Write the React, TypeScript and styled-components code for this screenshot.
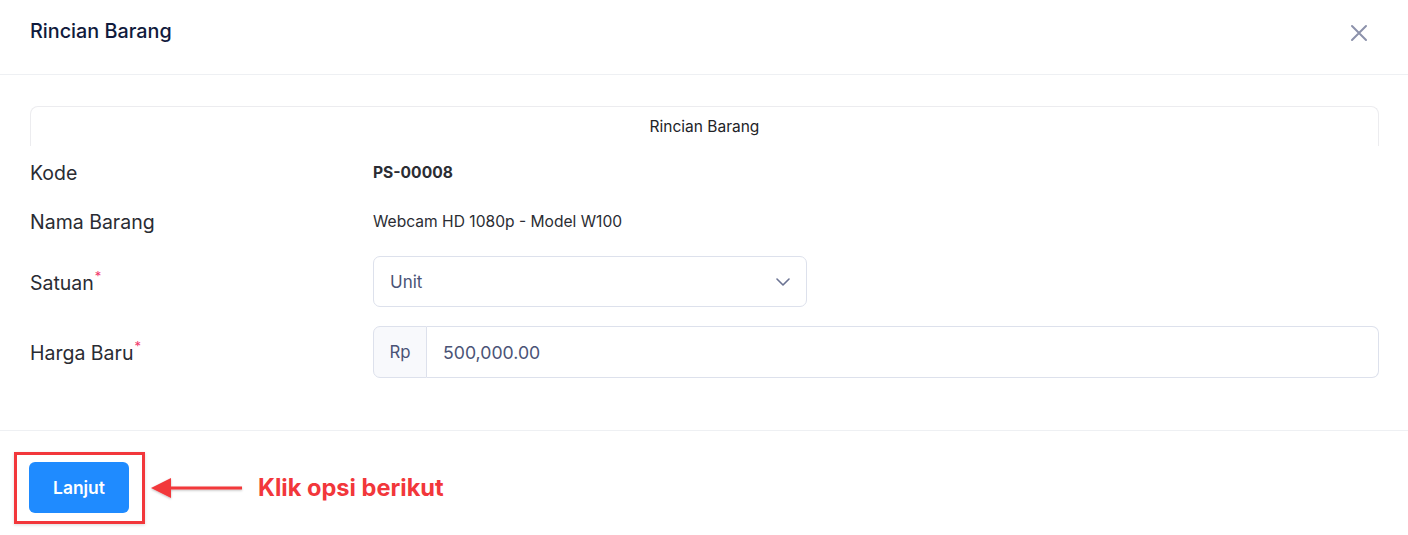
import React from 'react';
import styled, { createGlobalStyle } from 'styled-components';

const GlobalStyle = createGlobalStyle`
  html, body {
    margin: 0;
    padding: 0;
    background: #ffffff;
    font-family: Inter, 'Noto Sans', 'Liberation Sans', sans-serif;
  }
  * {
    box-sizing: border-box;
  }
`;

const Dialog = styled.div`
  width: 1408px;
  height: 535px;
  background: #fff;
  display: flex;
  flex-direction: column;
  overflow: hidden;
`;

const Header = styled.div`
  height: 75px;
  padding: 0 29px 0 30px;
  display: flex;
  align-items: center;
  justify-content: space-between;
  border-bottom: 1px solid #eef0f3;
`;

const Title = styled.h2`
  margin: 0 0 12px;
  font-size: 19.8px;
  font-weight: 500;
  color: #101a3c;
`;

const CloseButton = styled.button`
  border: 0;
  background: none;
  padding: 0;
  margin: 0 10px 8px 0;
  width: 20px;
  height: 20px;
  display: flex;
  align-items: center;
  justify-content: center;
  cursor: pointer;
`;

const Body = styled.div`
  padding: 31px 29px 52px 30px;
  border-bottom: 1px solid #eef0f3;
`;

const Card = styled.div`
  height: 40px;
  border: 1px solid #ececef;
  border-bottom: 0;
  border-radius: 8px 8px 0 0;
  display: flex;
  justify-content: center;
  padding-top: 10px;
  font-size: 15.5px;
  color: #222327;
`;

const Row = styled.div<{ $height: number; $top?: number }>`
  display: grid;
  grid-template-columns: 343px 1fr;
  align-items: center;
  min-height: ${(p) => p.$height}px;
  margin-top: ${(p) => p.$top ?? 0}px;
`;

const Label = styled.div`
  font-size: 19.5px;
  color: #2a2c33;
`;

const Required = styled.sup`
  color: #f0386b;
  font-size: 13px;
  margin-left: 1px;
  position: relative;
  top: -1px;
`;

const Value = styled.div<{ $bold?: boolean }>`
  font-size: 15.6px;
  font-weight: ${(p) => (p.$bold ? 700 : 400)};
  color: #2b2d33;
`;

const Select = styled.div`
  width: 434px;
  height: 51px;
  border: 1px solid #dde1ec;
  border-radius: 7px;
  display: flex;
  align-items: center;
  justify-content: space-between;
  padding: 0 16px 0 16px;
  font-size: 17px;
  color: #4a5376;
`;

const InputGroup = styled.div`
  display: flex;
  height: 52px;
`;

const Addon = styled.div`
  width: 54px;
  border: 1px solid #dde1ec;
  border-radius: 7px 0 0 7px;
  background: #f8f9fc;
  display: flex;
  align-items: center;
  justify-content: center;
  font-size: 16.8px;
  color: #4a5376;
`;

const Input = styled.div`
  flex: 1;
  border: 1px solid #dde1ec;
  border-left: 0;
  border-radius: 0 7px 7px 0;
  display: flex;
  align-items: center;
  padding-left: 16px;
  font-size: 17.7px;
  color: #4a5376;
`;

const Footer = styled.div`
  padding: 31px 29px 0 29px;
  display: flex;
  align-items: center;
`;

const Highlight = styled.div`
  position: relative;
`;

const Frame = styled.div`
  position: absolute;
  top: -10px;
  left: -15px;
  right: -16px;
  bottom: -11px;
  border: 3px solid #f2373b;
  pointer-events: none;
  box-shadow: 0 1px 3px rgba(0, 0, 0, 0.15);
`;

const PrimaryButton = styled.button`
  width: 100px;
  height: 51px;
  border: 0;
  border-radius: 6px;
  background: #1f8bff;
  color: #fff;
  font-family: inherit;
  font-size: 17.4px;
  font-weight: 600;
  cursor: pointer;
`;

const Annotation = styled.div`
  display: flex;
  align-items: center;
  margin-left: 21px;
  gap: 14px;
`;

const Hint = styled.span`
  font-size: 23.6px;
  font-weight: 700;
  color: #f2373b;
`;

const ChevronDown = () => (
  <svg width="14" height="8" viewBox="0 0 14 8" fill="none">
    <path d="M1 1l6 6 6-6" stroke="#6b7393" strokeWidth="1.6" strokeLinecap="round" strokeLinejoin="round" />
  </svg>
);

const CloseIcon = () => (
  <svg width="18" height="18" viewBox="0 0 18 18" fill="none">
    <path d="M2 2l14 14M16 2L2 16" stroke="#8c92ab" strokeWidth="2" strokeLinecap="round" />
  </svg>
);

const Arrow = () => (
  <svg width="94" height="26" viewBox="0 0 94 26" fill="none">
    <defs>
      <filter id="arrowShadow" x="-10%" y="-40%" width="120%" height="180%">
        <feDropShadow dx="0" dy="1" stdDeviation="1" floodColor="#000" floodOpacity="0.25" />
      </filter>
    </defs>
    <g filter="url(#arrowShadow)">
      <path d="M20 13H92" stroke="#f2373b" strokeWidth="3" />
      <path d="M1 13L21 3V23Z" fill="#f2373b" />
    </g>
  </svg>
);

export default function App() {
  return (
    <>
      <GlobalStyle />
      <Dialog>
        <Header>
          <Title>Rincian Barang</Title>
          <CloseButton aria-label="Tutup">
            <CloseIcon />
          </CloseButton>
        </Header>
        <Body>
          <Card>Rincian Barang</Card>
          <Row $height={53}>
            <Label>Kode</Label>
            <Value $bold>PS-00008</Value>
          </Row>
          <Row $height={45}>
            <Label>Nama Barang</Label>
            <Value>Webcam HD 1080p - Model W100</Value>
          </Row>
          <Row $height={51} $top={12}>
            <Label>
              Satuan<Required>*</Required>
            </Label>
            <Select>
              Unit
              <ChevronDown />
            </Select>
          </Row>
          <Row $height={52} $top={19}>
            <Label>
              Harga Baru<Required>*</Required>
            </Label>
            <InputGroup>
              <Addon>Rp</Addon>
              <Input>500,000.00</Input>
            </InputGroup>
          </Row>
        </Body>
        <Footer>
          <Highlight>
            <PrimaryButton>Lanjut</PrimaryButton>
            <Frame />
          </Highlight>
          <Annotation>
            <Arrow />
            <Hint>Klik opsi berikut</Hint>
          </Annotation>
        </Footer>
      </Dialog>
    </>
  );
}
